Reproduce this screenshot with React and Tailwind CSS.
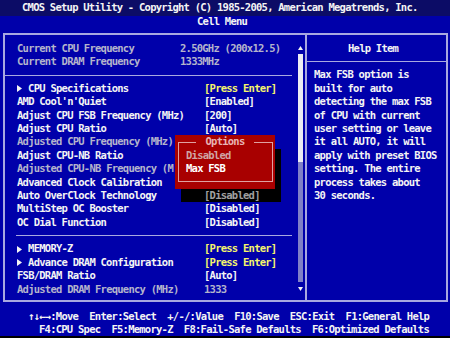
import React from "react";

const tones = {
  white: "text-[#f4f4f4]",
  gray: "text-[#b4b4cc]",
  yellow: "text-[#f6f66c]",
  shade: "text-[#a0a0a0] bg-black",
};

const Arrow = () => (
  <span className="inline-flex w-[11.1px] items-center">
    <svg width="5" height="7" viewBox="0 0 5 7">
      <polygon points="0,0 5,3.5 0,7" fill="#f4f4f4" />
    </svg>
  </span>
);

const Row = ({ label, value, labelTone = "white", valueTone = "white", arrow, narrow }) => (
  <div className="flex h-[13.4px] items-center leading-[13.4px] whitespace-pre">
    <div className={`${narrow ? "w-[163px]" : "w-[187px]"} ${tones[labelTone]} flex items-center`}>
      {arrow && <Arrow />}
      {label}
    </div>
    {value && <div className={tones[valueTone]}>{value}</div>}
  </div>
);

const Separator = ({ wide }) => (
  <div className="flex h-[13.4px] items-center">
    <div className={wide ? "-ml-[12px] h-[1px] w-[287px] bg-[#a8a8e0]" : "-ml-[1px] h-[1px] w-[276px] bg-[#a8a8e0]"}></div>
  </div>
);

const helpLines = [
  "Max FSB option is",
  "built for auto",
  "detecting the max FSB",
  "of CPU with current",
  "user setting or leave",
  "it all AUTO, it will",
  "apply with preset BIOS",
  "setting. The entire",
  "process takes about",
  "30 seconds.",
];

const App = () => {
  return (
    <div className="flex h-[338px] w-[450px] flex-col overflow-hidden bg-[#0000aa] font-['DejaVu_Sans_Mono',monospace] text-[10.5px] font-bold tracking-[-0.75px] text-[#f4f4f4]">
      <div className="flex h-[16px] shrink-0 items-center bg-[#0c0c66] pl-[22px] whitespace-pre">
        CMOS Setup Utility - Copyright (C) 1985-2005, American Megatrends, Inc.
      </div>
      <div className="h-[11px] shrink-0 pl-[197px] leading-[11px]">Cell Menu</div>

      <div className="relative mt-[6px] mr-[2px] ml-[3px] flex h-[269px] shrink-0 border-2 border-[#a8a8e0]">
        {/* popup shadow */}
        <div className="absolute top-[113.8px] left-[176px] h-[53.6px] w-[100px] bg-black"></div>

        <div className="flex w-[300px]">
          <div className="relative w-[293px] pt-[6.6px] pl-[12px]">
            <Row label="Current CPU Frequency" value="2.50GHz (200x12.5)" labelTone="gray" valueTone="gray" narrow />
            <Row label="Current DRAM Frequency" value="1333MHz" labelTone="gray" valueTone="gray" narrow />
            <Separator wide />
            <Row arrow label="CPU Specifications" value="[Press Enter]" valueTone="yellow" />
            <Row label="AMD Cool'n'Quiet" value="[Enabled]" />
            <Row label="Adjust CPU FSB Frequency (MHz)" value="[200]" />
            <Row label="Adjust CPU Ratio" value="[Auto]" />
            <Row label="Adjusted CPU Frequency (MHz)" labelTone="gray" />
            <Row label="Adjust CPU-NB Ratio" />
            <Row label="Adjusted CPU-NB Frequency (M" labelTone="gray" />
            <Row label="Advanced Clock Calibration" />
            <Row label="Auto OverClock Technology" value="[Disabled]" valueTone="shade" />
            <Row label="MultiStep OC Booster" value="[Disabled]" />
            <Row label="OC Dial Function" value="[Disabled]" />
            <Separator />
            <Row arrow label="MEMORY-Z" value="[Press Enter]" valueTone="yellow" />
            <Row arrow label="Advance DRAM Configuration" value="[Press Enter]" valueTone="yellow" />
            <Row label="FSB/DRAM Ratio" value="[Auto]" />
            <Row label="Adjusted DRAM Frequency (MHz)" value="1333" labelTone="gray" valueTone="gray" />
          </div>

          {/* scroll bar */}
          <div className="flex w-[5px] flex-col">
            <svg className="mt-[11px]" width="5" height="4" viewBox="0 0 5 4">
              <polygon points="2.5,0 5,4 0,4" fill="#f4f4f4" />
            </svg>
            <div className="mt-[4px] h-[108px] bg-[#ececf4]"></div>
            <div className="h-[120px] bg-[#8080c8]"></div>
            <svg className="mt-[4.5px]" width="5" height="4" viewBox="0 0 5 4">
              <polygon points="0,0 5,0 2.5,4" fill="#f4f4f4" />
            </svg>
          </div>
        </div>

        <div className="flex-1 border-l-2 border-[#a8a8e0] pt-[6.6px]">
          <div className="h-[13.4px] pl-[41px] leading-[13.4px]">Help Item</div>
          <div className="flex h-[13.4px] items-center">
            <div className="h-[1px] w-full bg-[#a8a8e0]"></div>
          </div>
          {helpLines.map((line) => (
            <div key={line} className="h-[13.4px] pl-[7px] leading-[13.4px] whitespace-pre">
              {line}
            </div>
          ))}
        </div>

        {/* options popup */}
        <div className="absolute top-[100.4px] left-[170px] h-[53.6px] w-[100px] bg-[#a80000]">
          <div className="absolute top-[6.7px] right-[2.5px] bottom-[7px] left-[3px] border border-[#e0a0a0]"></div>
          <div className="relative flex h-[13.4px] justify-center leading-[13.4px]">
            <span className="bg-[#a80000] px-[9px] text-[#e8b4b4]">Options</span>
          </div>
          <div className="relative h-[13.4px] pl-[11px] leading-[13.4px] text-[#d0a4a4]">Disabled</div>
          <div className="relative h-[13.4px] pl-[11px] leading-[13.4px] text-white">Max FSB</div>
        </div>
      </div>

      <div className="mt-[7.6px] h-[13.4px] shrink-0 pl-[28px] leading-[13.4px] whitespace-pre">
        ↑↓←→:Move  Enter:Select  +/-/:Value  F10:Save  ESC:Exit  F1:General Help
      </div>
      <div className="h-[13.4px] shrink-0 pl-[39px] leading-[13.4px] whitespace-pre">
        F4:CPU Spec  F5:Memory-Z  F8:Fail-Safe Defaults  F6:Optimized Defaults
      </div>
      <div className="flex-1"></div>
      <div className="h-[3px] shrink-0 bg-black"></div>
    </div>
  );
};

export default App;
